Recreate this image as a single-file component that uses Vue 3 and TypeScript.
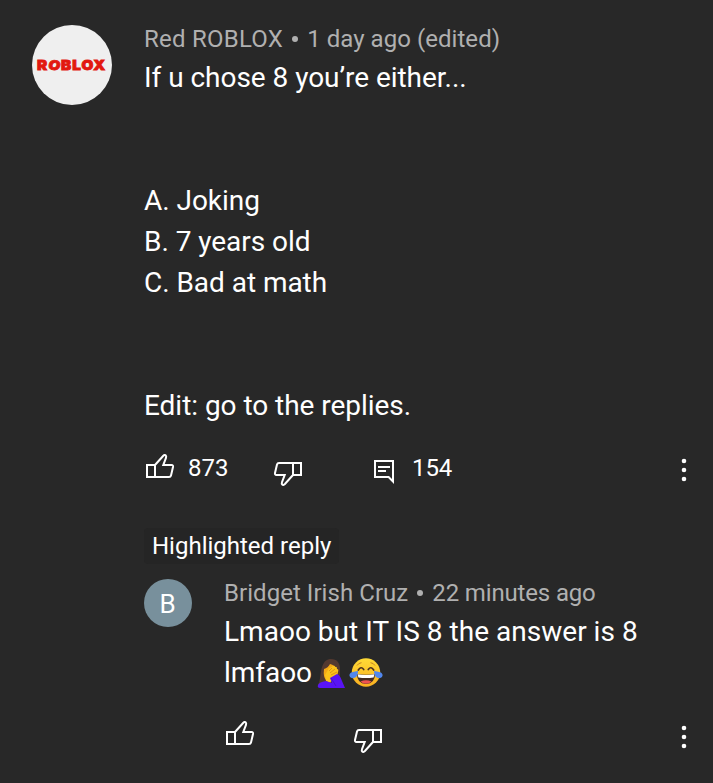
<script setup lang="ts">
const lines: string[] = ['If u chose 8 you’re either...', '', '', 'A. Joking', 'B. 7 years old', 'C. Bad at math', '', '', 'Edit: go to the replies.']
const thumb = 'M1 11H9V23H1Z M9 11L17.1 2Q18.8.3 19.9 1.7Q20.5 2.4 19.9 4.2L17.3 11H25.5Q27.4 11 27 13L25 21.4Q24.6 23 23 23H9'
</script>

<template>
  <main class="page">
    <article class="comment">
      <div class="avatar logo"><span class="word">R<span class="tilt">O</span>BLOX</span></div>
      <div class="content">
        <header class="meta"><span class="wide">Red ROBLOX</span><i class="dot"></i><span>1 day ago (edited)</span></header>
        <div class="body">
          <p v-for="(line, i) in lines" :key="i">{{ line }}</p>
        </div>
        <div class="actions">
          <svg class="thumb" viewBox="0 0 28 24"><path :d="thumb" /></svg>
          <span class="count likes">873</span>
          <svg class="thumb down" viewBox="0 0 28 24"><path :d="thumb" /></svg>
          <svg class="chat" viewBox="0 0 20 24"><path d="M1 1H19V21.5L14.6 17H1ZM4 7H16M4 11H12" /></svg>
          <span class="count">154</span>
          <svg class="more" viewBox="0 0 6 24"><circle cx="3" cy="3" r="2.3" /><circle cx="3" cy="12" r="2.3" /><circle cx="3" cy="21" r="2.3" /></svg>
        </div>
        <div class="badge"><span>Highlighted reply</span></div>
        <article class="reply">
          <div class="avatar small">B</div>
          <div class="content">
            <header class="meta"><span>Bridget Irish Cruz</span><i class="dot"></i><span class="tight">22 minutes ago</span></header>
            <div class="body">
              <p class="first">Lmaoo but IT IS 8 the answer is 8</p>
              <p class="last">
                <span>lmfaoo</span>
                <svg class="emoji palm" viewBox="0 0 30 32">
                  <path d="M1 28C4 22 3 16 5 10C7 4 10 2 14 2C20 2 23 6 23 12V20L16 28Z" fill="#543930" />
                  <path d="M7 12Q11 11 13 7Q18 8 19 12V19Q14 25 9 23Q6 20 7 12Z" fill="#f4a817" />
                  <path d="M8 18L11 13Q11 11 13 11L16 9Q18 8 18 10Q20 9 20 12Q22 12 21 15L20 20L15 23L13 26L9 24Z" fill="#fcc21b" />
                  <path d="M12 14L15 11M13 16L18 12M14 18L20 15" fill="none" stroke="#d78b12" stroke-width=".8" />
                  <path d="M1 28Q2 25 9 24L15 26L13 21L20 17Q23 18 25 24L28 31H3Q0 31 1 28Z" fill="#5914f5" />
                  <path d="M14 21L19 29" fill="none" stroke="#4510c5" stroke-width=".8" />
                </svg>
                <svg class="emoji joy" viewBox="0 0 34 32">
                  <defs><linearGradient id="face" x2="0" y2="1"><stop stop-color="#ffdb36" /><stop offset="1" stop-color="#f9af20" /></linearGradient></defs>
                  <circle cx="17" cy="15.5" r="14.2" fill="url(#face)" />
                  <path d="M8 8.5Q9.5 6 12.5 5.7M21.5 5.7Q24.5 6 26 8.5" fill="none" stroke="#c58422" stroke-width="1" />
                  <path d="M9.3 13Q12 8.8 14.7 12.5M19.3 12.5Q22 8.8 24.7 13" fill="none" stroke="#4a3020" stroke-width="1.7" stroke-linecap="round" />
                  <path d="M8 17Q17 18.5 26 17Q26 26.5 17 27Q8 26.5 8 17Z" fill="#422b22" />
                  <path d="M8.6 17.2Q17 18.7 25.4 17.2L24.6 20.5Q17 21.5 9.4 20.5Z" fill="#fff" />
                  <path d="M11.5 24.5Q17 22 22.5 24.5Q20.5 26.7 17 26.7Q13.5 26.7 11.5 24.5Z" fill="#ef5350" />
                  <path d="M9 14Q9 19.5 5.5 20.8Q1.5 22 .5 19Q0 16.2 3 15.2Q6 14.5 9 14ZM25 14Q25 19.5 28.5 20.8Q32.5 22 33.5 19Q34 16.2 31 15.2Q28 14.5 25 14Z" fill="#5187ee" />
                </svg>
              </p>
            </div>
            <div class="actions second">
              <svg class="thumb" viewBox="0 0 28 24"><path :d="thumb" /></svg>
              <svg class="thumb down" viewBox="0 0 28 24"><path :d="thumb" /></svg>
              <svg class="more" viewBox="0 0 6 24"><circle cx="3" cy="3" r="2.3" /><circle cx="3" cy="12" r="2.3" /><circle cx="3" cy="21" r="2.3" /></svg>
            </div>
          </div>
        </article>
      </div>
    </article>
  </main>
</template>

<style>
body { background: #282828; }
</style>
<style scoped>
.page { box-sizing: border-box; height: 783px; overflow: hidden; padding: 25px 0 0 32px; background: #282828; color: #fff; font-family: Roboto, sans-serif; }
.comment, .reply { display: flex; align-items: flex-start; }
.avatar { display: flex; align-items: center; justify-content: center; flex: none; border-radius: 50%; }
.logo { width: 80px; height: 80px; margin-right: 32px; background: #efefef; color: #e2180f; }
.word { font: 900 13px/14px Inter, sans-serif; -webkit-text-stroke: .8px #e2180f; letter-spacing: .9px; white-space: nowrap; transform: scaleX(1.17); }
.tilt { display: inline-block; transform: rotate(14deg); }
.content { flex: 1; min-width: 0; }
.meta { display: flex; align-items: center; height: 28px; color: #b0b0b0; font-size: 24px; line-height: 28px; letter-spacing: .05px; white-space: nowrap; }
.wide { letter-spacing: .24px; }
.tight { letter-spacing: -.15px; }
.dot { width: 6px; height: 6px; margin: 0 9px; border-radius: 50%; background: #b0b0b0; }
.body { margin-top: 4px; font-size: 28px; letter-spacing: -.04px; }
.body p { height: 41px; margin: 0; line-height: 41px; white-space: nowrap; }
.body .first { letter-spacing: .02px; }
.actions { display: flex; align-items: flex-start; height: 32px; margin-top: 28px; padding: 0 26px 0 2px; }
svg { display: block; flex: none; overflow: visible; }
.thumb { width: 28px; height: 24px; }
.thumb path, .chat path { fill: none; stroke: #fff; stroke-width: 2; }
.down { margin-top: 8px; transform: rotate(180deg); }
.count { font-size: 24px; line-height: 28px; letter-spacing: -.1px; }
.likes { width: 86px; margin-left: 14px; letter-spacing: 0; }
.chat { width: 20px; height: 24px; margin: 6px 18px 0 72px; }
.more { width: 6px; height: 24px; margin: 4px 0 0 auto; fill: #fff; }
.badge { display: flex; align-items: center; width: fit-content; height: 36px; margin-top: 42px; padding: 0 8px; border-radius: 4px; background: #252525; font-size: 24px; }
.reply { margin-top: 15px; }
.small { box-sizing: border-box; width: 48px; height: 48px; margin-right: 32px; padding: 2px 1px 0 0; background: #78909c; font-size: 26px; }
.last { display: flex; align-items: center; }
.palm { width: 30px; height: 32px; margin-left: 5px; }
.joy { width: 34px; height: 32px; margin-left: 2px; }
.second .down { margin-left: 100px; }
</style>
